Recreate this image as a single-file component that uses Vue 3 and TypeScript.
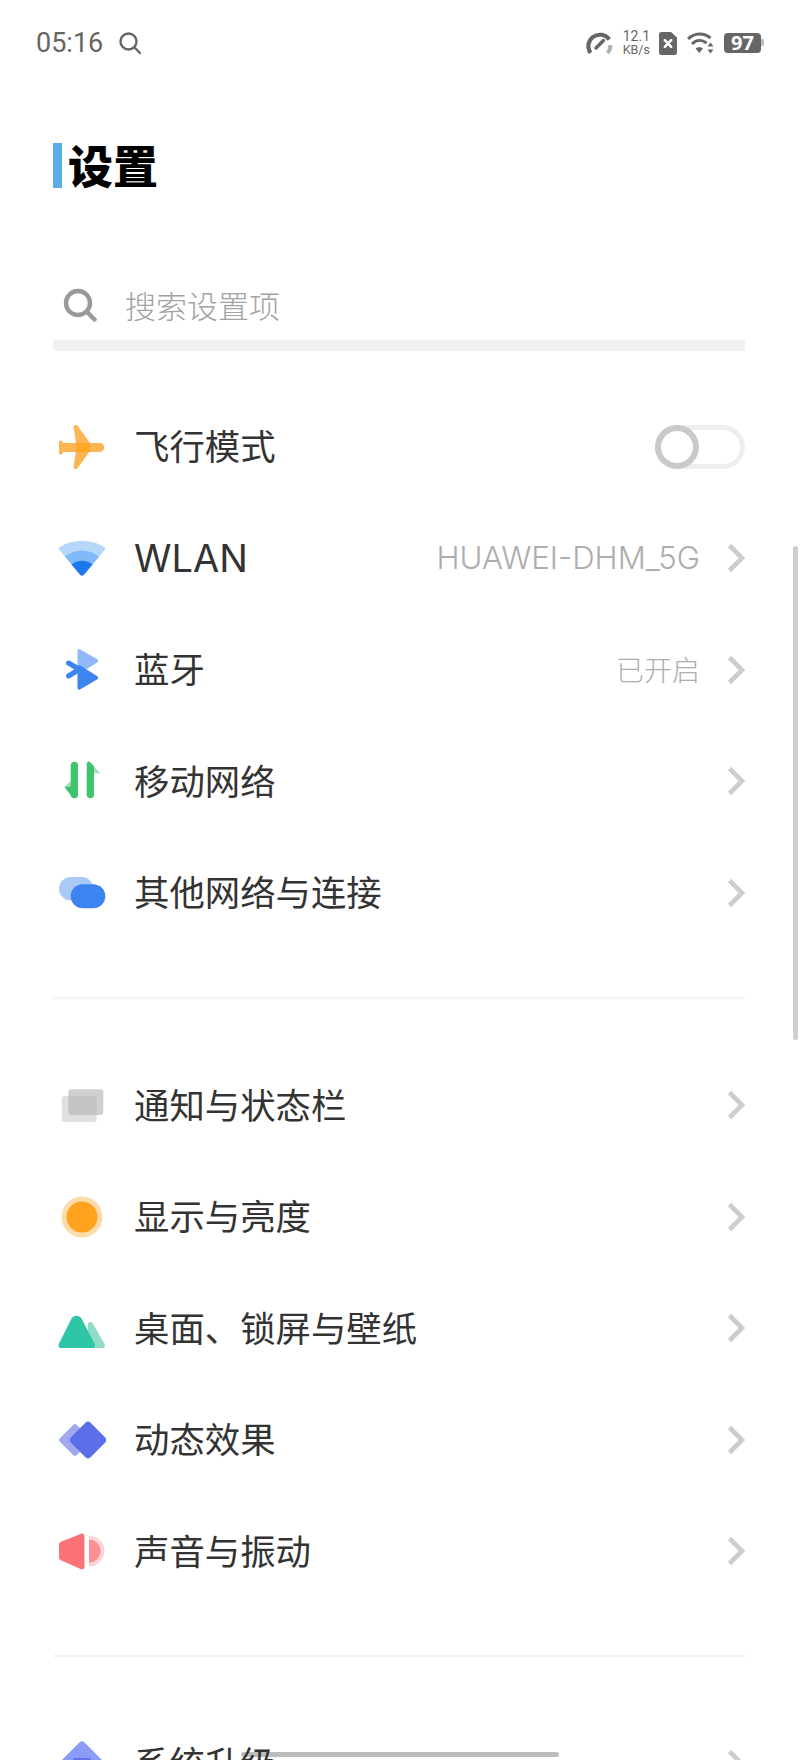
<script setup lang="ts">
interface SettingRow {
  icon: string
  label: string
  value?: string
  toggle?: boolean
  latin?: boolean
}

const groups: SettingRow[][] = [
  [
    { icon: 'plane', label: '飞行模式', toggle: true },
    { icon: 'wifi', label: 'WLAN', value: 'HUAWEI-DHM_5G', latin: true },
    { icon: 'bluetooth', label: '蓝牙', value: '已开启' },
    { icon: 'mobile', label: '移动网络' },
    { icon: 'links', label: '其他网络与连接' }
  ],
  [
    { icon: 'notify', label: '通知与状态栏' },
    { icon: 'display', label: '显示与亮度' },
    { icon: 'desktop', label: '桌面、锁屏与壁纸' },
    { icon: 'motion', label: '动态效果' },
    { icon: 'sound', label: '声音与振动' }
  ],
  [{ icon: 'upgrade', label: '系统升级' }]
]
</script>

<template>
  <div class="phone">
    <!-- Status bar -->
    <header class="status-bar">
      <div class="status-left">
        <span class="time">05:16</span>
        <svg width="24" height="24" viewBox="0 0 24 24" fill="none" stroke="#666" stroke-width="2.4">
          <circle cx="10.5" cy="10.5" r="8" />
          <path d="M16.5 16.5 22 22" stroke-linecap="round" />
        </svg>
      </div>
      <div class="status-right">
        <svg width="28" height="24" viewBox="0 0 28 24" fill="none" stroke-width="4">
          <path d="M5.500 22A11.500 11.500 0 1 1 24.300 8.500" stroke="#666" />
          <path d="M25.400 14A11.500 11.500 0 0 1 22.500 22" stroke="#b0b0b0" />
          <path d="M11 17 18.500 9.500" stroke="#666" stroke-width="3.4" stroke-linecap="round" />
        </svg>
        <div class="speed">
          <span>12.1</span>
          <span>KB/s</span>
        </div>
        <svg class="sim" width="18" height="23" viewBox="0 0 18 23">
          <path d="M2.500 0H12L18 5.500V20.500A2.500 2.500 0 0 1 15.500 23H2.500A2.500 2.500 0 0 1 0 20.500V2.500A2.500 2.500 0 0 1 2.500 0Z" fill="#666" />
          <path d="M5.800 8.200 12.200 14.800M12.200 8.200 5.800 14.800" stroke="#fff" stroke-width="2.600" stroke-linecap="round" />
        </svg>
        <svg width="27" height="22" viewBox="0 0 27 22" fill="none" stroke="#666" stroke-width="3">
          <path d="M1 7C7.500 .5 17 .5 23.500 6" />
          <path d="M5 12C9.500 7.500 15 7.500 19.500 11" />
          <path d="M12.200 21 8.500 16.500C10.500 14.800 14 14.800 16 16.500Z" fill="#666" stroke="none" />
          <path d="M23.500 10.500 26.500 14.500H20.500ZM23.500 21.500 20.500 17.500H26.500Z" fill="#666" stroke="none" />
        </svg>
        <div class="battery">
          <span class="battery-level">97</span>
          <span class="battery-tip"></span>
        </div>
      </div>
    </header>

    <!-- Title -->
    <div class="title-row">
      <span class="title-accent"></span>
      <h1 class="title">设置</h1>
    </div>

    <!-- Search -->
    <div class="search">
      <svg width="34" height="34" viewBox="0 0 34 34" fill="none" stroke="#999" stroke-width="4.400">
        <circle cx="15" cy="15" r="12" />
        <path d="M24 24 31.500 31.500" stroke-linecap="round" />
      </svg>
      <span class="search-hint">搜索设置项</span>
    </div>

    <!-- Setting groups -->
    <section v-for="(group, index) in groups" :key="index" class="group">
      <div v-for="row in group" :key="row.label" class="row" :class="{ latin: row.latin }">
        <svg class="row-icon" width="48" height="48" viewBox="0 0 48 48">
          <template v-if="row.icon === 'plane'">
            <path d="M15.500 3.500C16.500 1.500 19 1.500 20 3.500L32 20V28L20 44.500C19 46.500 16.500 46.500 15.500 44.500L18 28V20Z" fill="#fbb553" />
            <path d="M1 19C1 17 4.500 17 4.800 19V20H42C47.500 20 47.500 29 42 29H4.800V30C4.500 32 1 32 1 30Z" fill="#fbb553" />
            <path d="M18 20H32V29H18Z" fill="#ffa726" />
          </template>
          <template v-else-if="row.icon === 'wifi'">
            <path d="M22 40.500 1.200 15.800C.4 14.800.6 13.600 1.800 13 15 4.500 33 4.500 46.200 13 47.400 13.600 47.600 14.800 46.800 15.800L26 40.500C24.800 42 23.200 42 22 40.500Z" fill="#b7d7fa" />
            <path d="M22 40.500 7 22.500C17 14.500 31 14.500 41 22.500L26 40.500C24.800 42 23.200 42 22 40.500Z" fill="#7fbaf9" />
            <path d="M22 40.500 13.500 30.500C19.500 25.500 28.500 25.500 34.500 30.500L26 40.500C24.800 42 23.200 42 22 40.500Z" fill="#1b78ee" />
          </template>
          <template v-else-if="row.icon === 'bluetooth'">
            <path d="M19.500 5C19.500 3.200 21 2.800 22.200 3.600L39 13C40.500 14 40.500 15.500 39 16.500L22 27.500C21 28 19.500 27.500 19.500 26Z" fill="#8fb9f8" />
            <path d="M19.500 21C19.500 19.200 21 18.800 22.200 19.600L39 30C40.500 31 40.500 32.500 39 33.500L22 43.500C21 44 19.500 43.500 19.500 42Z" fill="#3d84f0" />
            <path d="M10.500 17 24 25M10.500 30 22 23" fill="none" stroke="#3d84f0" stroke-width="5" stroke-linecap="round" />
          </template>
          <template v-else-if="row.icon === 'mobile'">
            <path d="M6.300 29.700 13 24V30ZM42.700 16.300 36 10V16.300Z" fill="#a5e0ba" />
            <path d="M6.300 29.700H13V38.500Z" fill="#3ec46d" />
            <rect x="12.700" y="4.700" width="7.300" height="36.600" rx="3.600" fill="#3ec46d" />
            <path d="M28.700 7C28.700 4.500 31 3.800 32.500 5.500L36 9V38C36 42.300 28.700 42.300 28.700 38Z" fill="#3ec46d" />
          </template>
          <template v-else-if="row.icon === 'links'">
            <rect x="1" y="8" width="34.300" height="23.300" rx="11.600" fill="#a9c9f7" />
            <rect x="12.700" y="15.300" width="34.600" height="24" rx="12" fill="#3d84f0" />
          </template>
          <template v-else-if="row.icon === 'notify'">
            <rect x="10.300" y="8.300" width="35" height="25.700" rx="3" fill="#a8a8a8" fill-opacity="0.55" />
            <rect x="3.700" y="15" width="35" height="26" rx="3" fill="#b5b5b5" fill-opacity="0.42" />
          </template>
          <template v-else-if="row.icon === 'display'">
            <circle cx="24" cy="24" r="20.500" fill="#fddcab" />
            <circle cx="24" cy="24" r="15.500" fill="#ffa31f" />
          </template>
          <template v-else-if="row.icon === 'desktop'">
            <path d="M30 19C31.500 17.500 33.500 17.500 35 19.500L46.700 40.500C47.600 42.300 46.500 44 44.800 44H30Z" fill="#8fdcc9" />
            <path d="M13.500 14.500C15.500 10.800 21.500 10.800 23.500 14.500L36.500 39.500C37.700 42 36.500 44 34.500 44H3C1 44-.2 42 1 39.500Z" fill="#2fc6a5" />
          </template>
          <template v-else-if="row.icon === 'motion'">
            <rect x="5" y="12" width="24" height="24" rx="3" fill="#a0a9f0" transform="rotate(45 17 24)" />
            <rect x="16" y="10" width="28" height="28" rx="4" fill="#5b6fe8" transform="rotate(45 30 24)" />
          </template>
          <template v-else-if="row.icon === 'sound'">
            <path d="M1 17.500C1 16 2 15 3.500 14.500L22.500 7C24.500 6 26.500 7 26.500 9.500V39.500C26.500 42 24.500 43 22.500 42L3.500 33.500C2 33 1 32 1 30.500Z" fill="#fb7277" />
            <path d="M31 8.500A15.500 15.500 0 0 1 31 39.500Z" fill="#fcd6d6" />
            <path d="M31 12.500A11.500 11.500 0 0 1 31 35.500Z" fill="#fb9195" />
          </template>
          <template v-else>
            <rect x="7" y="7" width="34" height="34" rx="4" fill="#8b9cf8" transform="rotate(45 24 24)" />
            <rect x="15" y="18" width="18" height="18" rx="2" fill="#5f73ee" />
          </template>
        </svg>
        <span class="row-label">{{ row.label }}</span>
        <span v-if="row.value" class="row-value">{{ row.value }}</span>
        <span v-if="row.toggle" class="switch"><span class="switch-knob"></span></span>
        <svg v-else class="chevron" width="18" height="30" viewBox="0 0 18 30" fill="none" stroke="#cdcdcd" stroke-width="4.600">
          <path d="M2.500 2.500 15 15 2.500 27.500" />
        </svg>
      </div>
    </section>

    <!-- Overlays -->
    <span class="scrollbar"></span>
    <span class="home-bar"></span>
  </div>
</template>

<style scoped>
.phone {
  position: relative;
  width: 800px;
  height: 1760px;
  overflow: hidden;
  background: #fff;
  font-family: "Noto Sans CJK SC", sans-serif;
}

/* Status bar */
.status-bar {
  height: 86px;
  padding: 0 36px;
  display: flex;
  align-items: center;
  justify-content: space-between;
  box-sizing: border-box;
}

.status-left {
  display: flex;
  align-items: center;
  gap: 15px;
}

.time {
  font-family: Roboto, sans-serif;
  font-size: 27px;
  line-height: 32px;
  color: #666;
}

.status-right {
  display: flex;
  align-items: center;
}

.speed {
  display: flex;
  flex-direction: column;
  margin: 0 9px 0 10px;
  font-family: Roboto, sans-serif;
  font-size: 12.500px;
  line-height: 13px;
  color: #666;
}

.speed span:first-child {
  font-size: 14px;
}

.sim {
  margin-right: 10px;
}

.battery {
  position: relative;
  width: 37px;
  height: 20px;
  margin: 0 3px 0 10px;
  border-radius: 4px;
  background: #666;
  display: flex;
  align-items: center;
  justify-content: center;
}

.battery-level {
  font-family: "Open Sans", sans-serif;
  font-size: 20px;
  font-weight: 700;
  line-height: 20px;
  color: #fff;
}

.battery-tip {
  position: absolute;
  left: 37px;
  top: 6px;
  width: 3px;
  height: 7px;
  border-radius: 0 2px 2px 0;
  background: #bbb;
}

/* Title */
.title-row {
  margin: 57px 0 0 53px;
  display: flex;
  align-items: flex-start;
  gap: 6px;
}

.title-accent {
  width: 9px;
  height: 45px;
  background: #5aade8;
}

.title {
  margin: 0;
  font-size: 45px;
  font-weight: 900;
  line-height: 43px;
  color: #000;
}

/* Search */
.search {
  margin: 82px 55px 0 53px;
  height: 70px;
  padding-left: 10px;
  display: flex;
  align-items: center;
  gap: 28px;
  border-bottom: 11px solid #f1f1f1;
}

.search-hint {
  font-size: 31px;
  line-height: 40px;
  font-weight: 300;
  color: #a3a3a3;
}

/* Groups */
.group {
  margin: 40px 55px 0 53px;
  padding-bottom: 48px;
  border-bottom: 2px solid #f3f3f3;
}

.group + .group {
  margin-top: 51px;
}

.row {
  height: 111.500px;
  display: flex;
  align-items: center;
}

.row-icon {
  flex: none;
  margin-left: 5px;
}

.row-label {
  position: relative;
  z-index: 1;
  margin: 0 0 3px 28px;
  font-size: 35.400px;
  line-height: 48px;
  color: #333;
}

.row-value {
  margin: 0 0 2px auto;
  font-size: 28px;
  font-weight: 300;
  line-height: 40px;
  color: #adadad;
}

.latin .row-label {
  margin-bottom: 0;
  font-family: Inter, sans-serif;
  font-size: 38px;
}

.latin .row-value {
  margin-bottom: 0;
  font-family: Inter, sans-serif;
  font-size: 31.200px;
}

.chevron {
  flex: none;
  margin-left: 27px;
}

.row-label + .chevron,
.row-label + .switch {
  margin-left: auto;
}

/* Switch */
.switch {
  position: relative;
  width: 90px;
  height: 44px;
  box-sizing: border-box;
  border: 5px solid #eee;
  border-radius: 22px;
}

.switch-knob {
  position: absolute;
  left: -5px;
  top: -5px;
  width: 44px;
  height: 44px;
  box-sizing: border-box;
  border: 6px solid #c9c9c9;
  border-radius: 50%;
  background: #fff;
}

/* Overlays */
.scrollbar {
  position: absolute;
  left: 793px;
  top: 546px;
  width: 5px;
  height: 494px;
  border-radius: 3px;
  background: #cfcfcf;
}

.home-bar {
  position: absolute;
  left: 241px;
  top: 1752px;
  width: 318px;
  height: 5px;
  border-radius: 3px;
  background: #bdbdbd;
}
</style>
